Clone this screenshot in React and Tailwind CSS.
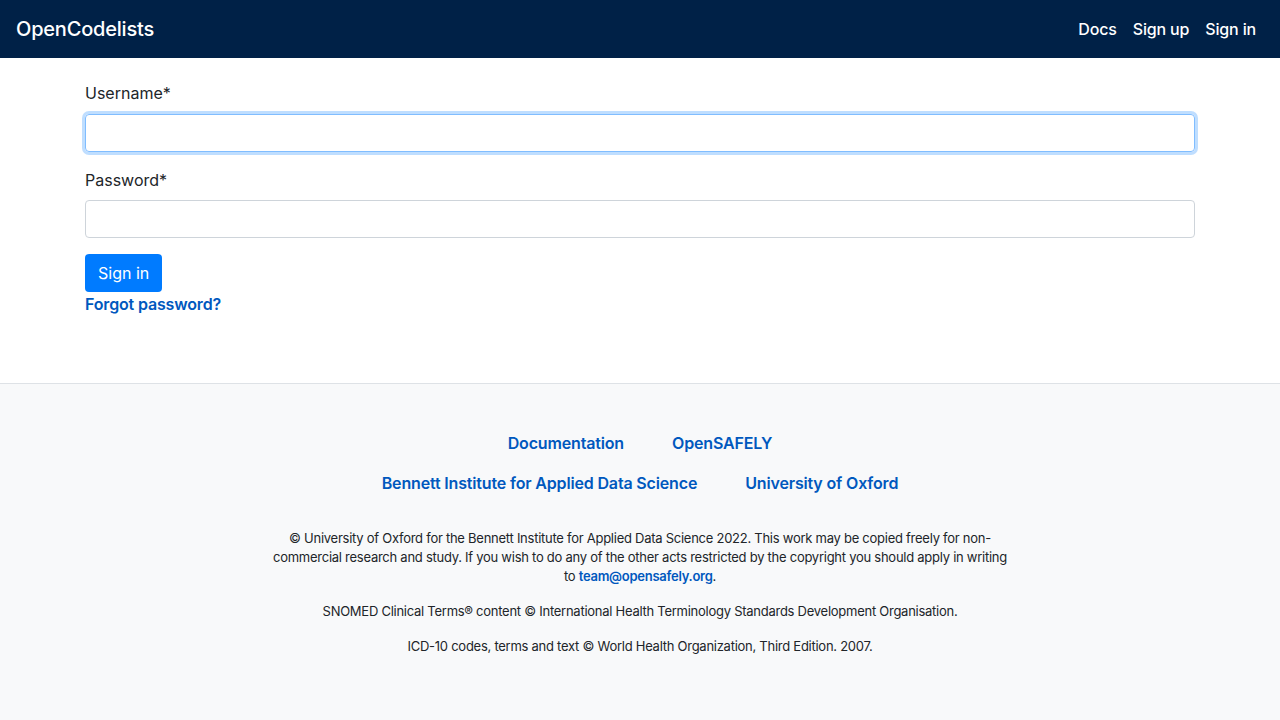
export default function App() {
  return (
    <div className="flex min-h-[720px] flex-col bg-white font-['Inter',sans-serif] text-[#212529]">
      <nav className="flex h-[58px] items-center justify-between bg-[#002147] px-4">
        <a href="#" className="text-[20px] font-medium tracking-[-0.01em] text-white">
          OpenCodelists
        </a>
        <ul className="flex items-center tracking-[-0.01em]">
          <li>
            <a href="#" className="px-2 text-[16px] font-medium text-white">Docs</a>
          </li>
          <li>
            <a href="#" className="px-2 text-[16px] font-medium text-white">Sign up</a>
          </li>
          <li>
            <a href="#" className="px-2 text-[16px] font-medium text-white">Sign in</a>
          </li>
        </ul>
      </nav>

      <main className="mx-auto w-full max-w-[1140px] px-[15px] pt-[23px] pb-[67px]">
        <form className="flex flex-col">
          <label className="mb-[9px] text-[16px] leading-6">Username*</label>
          <input
            type="text"
            className="h-[38px] w-full rounded border border-[#80bdff] px-3 shadow-[0_0_0_3px_rgba(0,123,255,0.25)] outline-none"
          />
          <label className="mt-4 mb-2 text-[16px] leading-6">Password*</label>
          <input
            type="password"
            className="h-[38px] w-full rounded border border-[#ced4da] px-3 outline-none"
          />
          <div className="mt-4">
            <button
              type="button"
              className="h-[38px] rounded bg-[#007bff] px-[13px] text-[16px] text-white"
            >
              Sign in
            </button>
          </div>
          <a href="#" className="text-[16px] font-semibold leading-6 tracking-[-0.01em] text-[#0058be]">
            Forgot password?
          </a>
        </form>
      </main>

      <footer className="flex-1 border-t border-[#dee2e6] bg-[#f8f9fa] pt-[47px] pb-16">
        <div className="flex justify-center gap-12 text-[16px] font-semibold tracking-[-0.01em] text-[#0058be]">
          <a href="#">Documentation</a>
          <a href="#">OpenSAFELY</a>
        </div>
        <div className="mt-4 flex justify-center gap-12 text-[16px] font-semibold tracking-[-0.01em] text-[#0058be]">
          <a href="#">Bennett Institute for Applied Data Science</a>
          <a href="#">University of Oxford</a>
        </div>
        <div className="mx-auto mt-[34px] max-w-[742px] text-center text-[13px] leading-[19px] tracking-[-0.02em]">
          <p>
            © University of Oxford for the Bennett Institute for Applied Data Science 2022. This work may be
            copied freely for non-commercial research and study. If you wish to do any of the other acts
            restricted by the copyright you should apply in writing to{' '}
            <a href="#" className="font-semibold text-[#0058be]">team@opensafely.org</a>.
          </p>
          <p className="mt-4">
            SNOMED Clinical Terms® content © International Health Terminology Standards Development Organisation.
          </p>
          <p className="mt-4">ICD-10 codes, terms and text © World Health Organization, Third Edition. 2007.</p>
        </div>
      </footer>
    </div>
  )
}
